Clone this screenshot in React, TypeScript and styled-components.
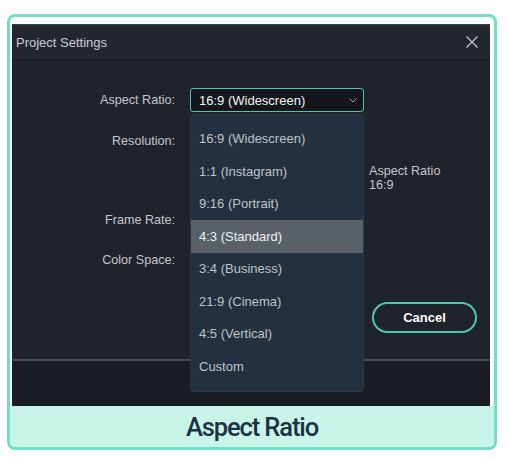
import styled, { createGlobalStyle } from 'styled-components';

const GlobalStyle = createGlobalStyle`
  html, body {
    margin: 0;
    padding: 0;
    background: #ffffff;
  }
  body {
    font-family: "Liberation Sans", Arial, sans-serif;
  }
  * {
    box-sizing: border-box;
  }
`;

const Frame = styled.div`
  width: 490px;
  margin: 14px 0 0 7px;
  border: 3px solid #6fdfc6;
  border-radius: 8px;
  overflow: hidden;
  background: #ffffff;
  display: flex;
  flex-direction: column;
`;

const Screen = styled.div`
  width: 478px;
  height: 382px;
  margin: 7px 4px 0 2px;
  display: flex;
  flex-direction: column;
  background: #1a1e24;
  border-top: 1px solid #3c4148;
`;

const TitleBar = styled.div`
  height: 35px;
  flex-shrink: 0;
  display: flex;
  align-items: center;
  justify-content: space-between;
  padding: 0 12px 0 4px;
  background: #23282f;
  border-bottom: 1px solid #16191e;
  color: #c9cdd2;
  font-size: 13px;
`;

const CloseButton = styled.div`
  width: 12px;
  height: 12px;
  display: flex;
  svg {
    display: block;
  }
`;

const Body = styled.div`
  position: relative;
  height: 301px;
  flex-shrink: 0;
  display: flex;
  flex-direction: column;
  background: #1f232a;
  border-bottom: 2px solid #474c54;
  padding-top: 28px;
`;

const Form = styled.div`
  display: grid;
  grid-template-columns: 178px 174px 1fr;
  grid-template-rows: 24px 17px 24px 55px 24px 16px 24px;
`;

const Label = styled.div<{ row: number }>`
  grid-column: 1;
  grid-row: ${(p) => p.row};
  display: flex;
  align-items: center;
  justify-content: flex-end;
  padding-right: 15px;
  color: #c3c7cc;
  font-size: 12.6px;
`;

const SelectWrap = styled.div`
  position: relative;
  grid-column: 2;
  grid-row: 1;
`;

const Select = styled.div`
  height: 24px;
  display: flex;
  align-items: center;
  justify-content: space-between;
  padding: 0 6px 0 8px;
  background: #13171c;
  border: 1px solid #4fc6a6;
  border-radius: 3px;
  color: #f2f4f6;
  font-size: 13px;
`;

const Menu = styled.div`
  position: absolute;
  top: 26px;
  left: 0;
  width: 174px;
  height: 278px;
  padding-top: 7.5px;
  background: #233040;
  border: 1px solid #2c3948;
  border-radius: 4px;
  z-index: 5;
`;

const MenuItem = styled.div<{ active?: boolean }>`
  height: 32.5px;
  display: flex;
  align-items: center;
  padding-left: 8px;
  font-size: 13px;
  color: ${(p) => (p.active ? '#eef0f2' : '#bfc4ca')};
  background: ${(p) => (p.active ? '#5a6067' : 'transparent')};
`;

const Info = styled.div`
  grid-column: 3;
  grid-row: 4;
  padding: 11px 0 0 5px;
  color: #c3c7cc;
  font-size: 12.6px;
  line-height: 14px;
`;

const Actions = styled.div`
  margin-top: auto;
  display: flex;
  justify-content: flex-end;
  padding: 0 13px 26px 0;
`;

const CancelButton = styled.button`
  width: 105px;
  height: 31px;
  border: 2px solid #4fc8a5;
  border-radius: 16px;
  background: #1f232a;
  color: #ffffff;
  font-family: "Liberation Sans", Arial, sans-serif;
  font-weight: 700;
  font-size: 13px;
`;

const Footer = styled.div`
  flex: 1;
  background: #1a1e24;
`;

const Caption = styled.div`
  height: 41px;
  display: flex;
  align-items: center;
  justify-content: center;
  background: #c9f5e8;
  color: #1b3244;
  font-family: Roboto, "Liberation Sans", sans-serif;
  font-weight: 500;
  font-size: 25.5px;
  letter-spacing: -1.1px;
`;

const ratios = [
  '16:9 (Widescreen)',
  '1:1 (Instagram)',
  '9:16 (Portrait)',
  '4:3 (Standard)',
  '3:4 (Business)',
  '21:9 (Cinema)',
  '4:5 (Vertical)',
  'Custom',
];

export default function App() {
  return (
    <>
      <GlobalStyle />
      <Frame>
        <Screen>
          <TitleBar>
            <span>Project Settings</span>
            <CloseButton>
              <svg width="12" height="12" viewBox="0 0 12 12">
                <path d="M0.5 0.5 L11.5 11.5 M11.5 0.5 L0.5 11.5" stroke="#c4c8cc" strokeWidth="1.3" />
              </svg>
            </CloseButton>
          </TitleBar>
          <Body>
            <Form>
              <Label row={1}>Aspect Ratio:</Label>
              <SelectWrap>
                <Select>
                  <span>16:9 (Widescreen)</span>
                  <svg width="8" height="5" viewBox="0 0 8 5">
                    <polyline points="0.5,0.5 4,4 7.5,0.5" fill="none" stroke="#9aa0a6" strokeWidth="1" />
                  </svg>
                </Select>
                <Menu>
                  {ratios.map((r) => (
                    <MenuItem key={r} active={r === '4:3 (Standard)'}>
                      {r}
                    </MenuItem>
                  ))}
                </Menu>
              </SelectWrap>
              <Label row={3}>Resolution:</Label>
              <Info>
                Aspect Ratio
                <br />
                16:9
              </Info>
              <Label row={5}>Frame Rate:</Label>
              <Label row={7}>Color Space:</Label>
            </Form>
            <Actions>
              <CancelButton>Cancel</CancelButton>
            </Actions>
          </Body>
          <Footer />
        </Screen>
        <Caption>Aspect Ratio</Caption>
      </Frame>
    </>
  );
}
